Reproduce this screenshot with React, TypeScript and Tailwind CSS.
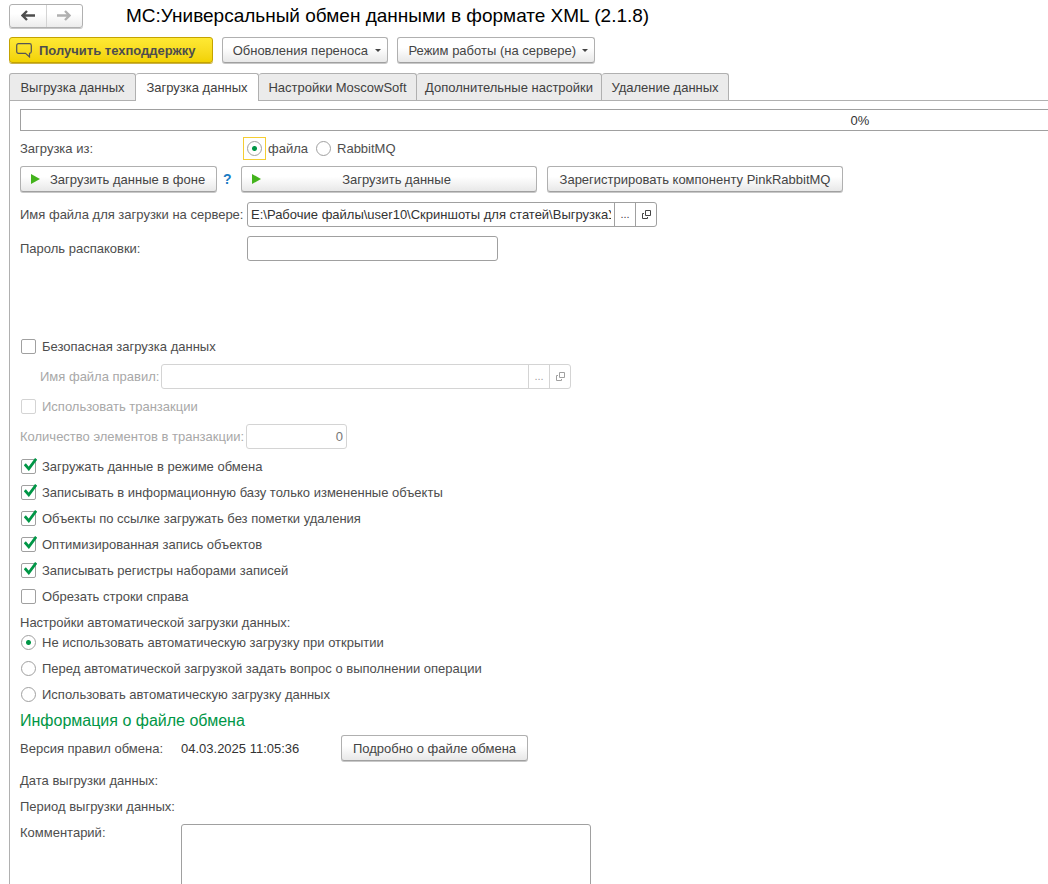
import type { ButtonHTMLAttributes, ReactNode } from 'react';
import clsx from 'clsx';

const tabs = [
  { label: 'Выгрузка данных', width: 'w-[127px]' },
  { label: 'Загрузка данных', width: 'w-[123px]' },
  { label: 'Настройки MoscowSoft', width: 'w-[158px]' },
  { label: 'Дополнительные настройки', width: 'w-[185px]' },
  { label: 'Удаление данных', width: 'w-[127px]' },
];

const loadOptions = [
  { label: 'Загружать данные в режиме обмена', checked: true },
  { label: 'Записывать в информационную базу только измененные объекты', checked: true },
  { label: 'Объекты по ссылке загружать без пометки удаления', checked: true },
  { label: 'Оптимизированная запись объектов', checked: true },
  { label: 'Записывать регистры наборами записей', checked: true },
  { label: 'Обрезать строки справа', checked: false },
];

const autoLoadModes = [
  'Не использовать автоматическую загрузку при открытии',
  'Перед автоматической загрузкой задать вопрос о выполнении операции',
  'Использовать автоматическую загрузку данных',
];

function Button({ className, children, ...props }: ButtonHTMLAttributes<HTMLButtonElement>) {
  return (
    <button
      type="button"
      className={clsx(
        'flex h-[26px] items-center rounded-[3px] border border-[#b0b0b0] border-b-[#a0a0a0] bg-linear-to-b from-white from-40% to-[#e8e8e8] whitespace-nowrap text-[#444] shadow-[0_1px_0_#c8c8c8]',
        className,
      )}
      {...props}
    >
      {children}
    </button>
  );
}

function Caret() {
  return (
    <svg className="mt-px h-[3px] w-[6px]" viewBox="0 0 6 3" fill="#444">
      <path d="M0 0h6L3 3z" />
    </svg>
  );
}

function PlayIcon() {
  return (
    <svg className="h-[10px] w-[9px] shrink-0" viewBox="0 0 9 10" fill="#43b31c">
      <path d="M0 0l9 5-9 5z" />
    </svg>
  );
}

function ArrowIcon({ className }: { className?: string }) {
  return (
    <svg className={clsx('h-[11px] w-[14px]', className)} viewBox="0 0 14 11" fill="none" stroke="currentColor" strokeWidth="2.4">
      <path d="M1.5 5.5H14M6 1L1.5 5.5 6 10" />
    </svg>
  );
}

function OpenIcon() {
  return (
    <svg className="h-[9px] w-[9px]" viewBox="0 0 9 9" fill="none" stroke="currentColor">
      <path d="M3.5 .5h5v5h-5zM2 3.5H.5v5h5V7" />
    </svg>
  );
}

function Checkbox({ label, checked, disabled }: { label: string; checked?: boolean; disabled?: boolean }) {
  return (
    <label className={clsx('flex h-[26px] items-center gap-[6px] pl-px', disabled && 'text-[#a8a8a8]')}>
      <span className="relative flex">
        <input
          type="checkbox"
          defaultChecked={checked}
          disabled={disabled}
          className="peer size-[15px] appearance-none rounded-[2px] border border-[#a0a0a0] bg-white disabled:border-[#d4d4d4]"
        />
        <svg
          className="pointer-events-none absolute -top-px left-[3px] hidden h-[13px] w-[13px] peer-checked:block"
          viewBox="0 0 13 13"
          fill="none"
          stroke="#009646"
          strokeWidth="2.8"
        >
          <path d="M.8 6.2L4.8 10.8 12.2 .8" />
        </svg>
      </span>
      {label}
    </label>
  );
}

function Radio({ name, label, checked, focused }: { name: string; label: string; checked?: boolean; focused?: boolean }) {
  return (
    <label className={clsx('flex h-[26px] items-center', focused ? 'gap-[2px]' : 'gap-[6px] pl-px')}>
      <span className={clsx('flex', focused && 'border border-[#f5cd33] p-[3px]')}>
        <input
          type="radio"
          name={name}
          defaultChecked={checked}
          className="size-[15px] appearance-none rounded-full border border-[#a0a0a0] bg-white checked:bg-[radial-gradient(circle,#009646_2px,transparent_3px)]"
        />
      </span>
      {label}
    </label>
  );
}

function FileField({ id, value, disabled }: { id: string; value?: string; disabled?: boolean }) {
  return (
    <div
      className={clsx(
        'flex h-[25px] w-[410px] divide-x rounded-[3px] border',
        disabled
          ? 'divide-[#d4d4d4] border-[#d4d4d4] text-[#a0a0a0]'
          : 'divide-[#a0a0a0] border-[#a0a0a0] text-[#444]',
      )}
    >
      <div className="flex min-w-0 flex-1 px-[3px]">
        <input id={id} defaultValue={value} disabled={disabled} className="w-full text-[#333] outline-none" />
      </div>
      <button type="button" disabled={disabled} aria-label="Выбрать" className="w-[21px] text-[11px]">
        ...
      </button>
      <button type="button" disabled={disabled} aria-label="Открыть" className="flex w-[20px] items-center justify-center">
        <OpenIcon />
      </button>
    </div>
  );
}

function InfoRow({ label, children }: { label: string; children?: ReactNode }) {
  return (
    <div className="flex h-[26px] items-center">
      <span className="w-[161px]">{label}</span>
      {children}
    </div>
  );
}

export default function App() {
  return (
    <div className="flex h-screen flex-col overflow-hidden bg-white pl-[9px] font-['Liberation_Sans',Arial,sans-serif] text-[13px] leading-[17px] text-[#4d4d4d]">
      <header className="flex shrink-0 items-center pt-[3px]">
        <div className="flex h-[24px] w-[74px] divide-x divide-[#d4d4d4] rounded-[3px] border border-[#b0b0b0] bg-linear-to-b from-white from-40% to-[#ececec] shadow-[0_1px_0_#c8c8c8]">
          <button type="button" aria-label="Назад" className="flex flex-1 items-center justify-center text-[#4d4d4d]">
            <ArrowIcon />
          </button>
          <button type="button" aria-label="Вперед" disabled className="flex flex-1 items-center justify-center text-[#b0b0b0]">
            <ArrowIcon className="rotate-180" />
          </button>
        </div>
        <h1 className="ml-[43px] text-[19px] leading-[25px] whitespace-nowrap text-black">
          МС:Универсальный обмен данными в формате XML (2.1.8)
        </h1>
      </header>

      <div className="mt-[9px] flex shrink-0 gap-[9px]">
        <button
          type="button"
          className="flex h-[26px] w-[204px] items-center gap-[7px] rounded-[3px] border border-[#c4a300] bg-linear-to-b from-[#ffe933] to-[#f2d200] pl-[6px] font-bold whitespace-nowrap text-[#4d4d4d] shadow-[0_1px_0_#c9b24a]"
        >
          <svg className="h-[15px] w-[16px] shrink-0" viewBox="0 0 16 15" fill="none" stroke="#555" strokeWidth="1.2">
            <path d="M2.5 .7h11q1.8 0 1.8 1.8v6q0 1.8-1.8 1.8v3.6L9.5 10.3h-7Q.7 10.3 .7 8.5v-6Q.7 .7 2.5 .7z" />
          </svg>
          Получить техподдержку
        </button>
        <Button className="w-[166px] justify-end gap-[7px] pr-[6px]">
          Обновления переноса
          <Caret />
        </Button>
        <Button className="w-[198px] justify-end gap-[6px] pr-[6px]">
          Режим работы (на сервере)
          <Caret />
        </Button>
      </div>

      <div role="tablist" className="mt-[10px] flex h-[28px] shrink-0 border-b border-[#b0b0b0]">
        {tabs.map((tab, i) => (
          <button
            key={tab.label}
            type="button"
            role="tab"
            aria-selected={i === 1}
            className={clsx(
              'rounded-t-[3px] border-t border-r border-[#b0b0b0] text-center whitespace-nowrap text-[#404040]',
              tab.width,
              i === 0 && 'border-l',
              i === 1 ? '-mb-px bg-white pb-px' : 'bg-[#ebebeb]',
            )}
          >
            {tab.label}
          </button>
        ))}
      </div>

      <main className="min-h-0 flex-1 overflow-hidden border-l border-[#b0b0b0] pt-2 pl-[10px]">
        <div
          role="progressbar"
          aria-valuenow={0}
          className="flex h-[22px] w-[1680px] items-center justify-center border border-[#a0a0a0] text-[#333]"
        >
          0%
        </div>

        <div className="mt-1 flex items-center">
          <span className="w-[223px]">Загрузка из:</span>
          <Radio name="source" label="файла" checked focused />
          <div className="ml-[7px]">
            <Radio name="source" label="RabbitMQ" />
          </div>
        </div>

        <div className="mt-[5px] flex items-center">
          <Button className="w-[197px] gap-[10px] pl-[10px]">
            <PlayIcon />
            Загрузить данные в фоне
          </Button>
          <a href="#help" className="w-[24px] pl-[6px] text-[14px] font-bold text-[#1a7cc4]">
            ?
          </a>
          <Button className="w-[296px] px-[10px]">
            <PlayIcon />
            <span className="flex-1 pl-[6px] text-center">Загрузить данные</span>
          </Button>
          <Button className="ml-[10px] w-[296px] justify-center">Зарегистрировать компоненту PinkRabbitMQ</Button>
        </div>

        <div className="mt-[10px] flex items-center">
          <label htmlFor="server-file" className="w-[227px] whitespace-nowrap">
            Имя файла для загрузки на сервере:
          </label>
          <FileField id="server-file" value="E:\Рабочие файлы\user10\Скриншоты для статей\ВыгрузкаУТ.xml" />
        </div>

        <div className="mt-[9px] flex items-center">
          <label htmlFor="password" className="w-[227px]">
            Пароль распаковки:
          </label>
          <input id="password" type="password" className="h-[25px] w-[251px] rounded-[3px] border border-[#a0a0a0] px-[3px]" />
        </div>

        <div className="mt-[72px]">
          <Checkbox label="Безопасная загрузка данных" />
        </div>
        <div className="mt-[5px] flex items-center pl-5 text-[#a8a8a8]">
          <label htmlFor="rules-file" className="w-[121px]">
            Имя файла правил:
          </label>
          <FileField id="rules-file" disabled />
        </div>
        <div className="mt-1">
          <Checkbox label="Использовать транзакции" disabled />
        </div>
        <div className="mt-[5px] flex items-center text-[#a8a8a8]">
          <label htmlFor="transaction-size" className="w-[226px] whitespace-nowrap">
            Количество элементов в транзакции:
          </label>
          <input
            id="transaction-size"
            defaultValue="0"
            disabled
            className="h-[25px] w-[101px] rounded-[3px] border border-[#d4d4d4] px-[3px] text-right text-[#777]"
          />
        </div>

        <div className="mt-1">
          {loadOptions.map((option) => (
            <Checkbox key={option.label} {...option} />
          ))}
        </div>

        <fieldset>
          <legend className="h-5 pt-[5px]">Настройки автоматической загрузки данных:</legend>
          {autoLoadModes.map((mode, i) => (
            <Radio key={mode} name="auto-load" label={mode} checked={i === 0} />
          ))}
        </fieldset>

        <h2 className="text-[16px] leading-7 text-[#009646]">Информация о файле обмена</h2>
        <InfoRow label="Версия правил обмена:">
          <span className="w-[160px] text-[#333]">04.03.2025 11:05:36</span>
          <Button className="w-[187px] justify-center">Подробно о файле обмена</Button>
        </InfoRow>
        <div className="mt-[6px]">
          <InfoRow label="Дата выгрузки данных:" />
        </div>
        <InfoRow label="Период выгрузки данных:" />
        <div className="flex items-start">
          <label htmlFor="comment" className="w-[161px] pt-[5px]">
            Комментарий:
          </label>
          <textarea id="comment" className="mt-[5px] h-[100px] w-[410px] resize-none rounded-[3px] border border-[#a0a0a0] p-1" />
        </div>
      </main>
    </div>
  );
}
